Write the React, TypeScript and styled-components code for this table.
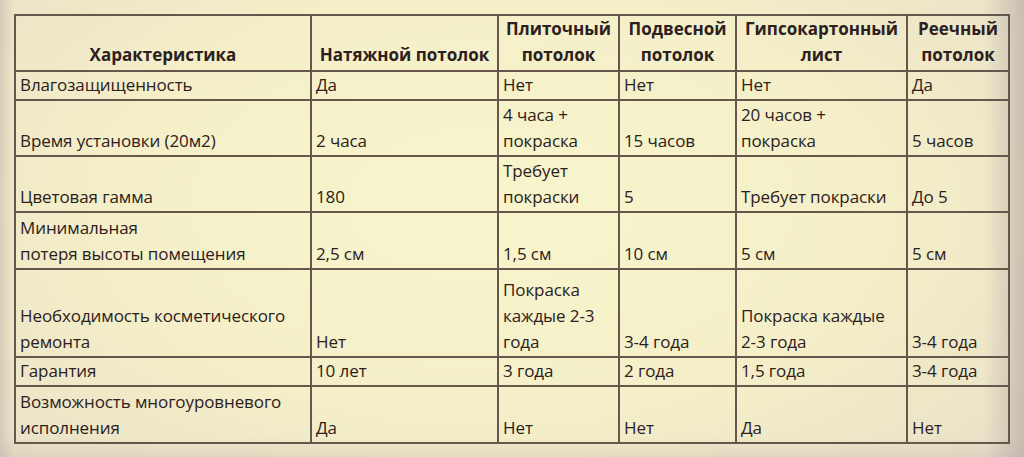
import React from 'react';
import styled, { createGlobalStyle } from 'styled-components';

const GlobalStyle = createGlobalStyle`
  html, body {
    margin: 0;
    padding: 0;
  }
  body {
    width: 1024px;
    height: 457px;
    overflow: hidden;
    font-family: 'Open Sans', 'Noto Sans', sans-serif;
  }
`;

const Page = styled.div`
  width: 1024px;
  height: 457px;
  box-sizing: border-box;
  padding: 14px 15px 0 14px;
  background:
    linear-gradient(90deg, rgba(190, 170, 170, 0.45) 0px, rgba(190, 170, 170, 0) 14px),
    linear-gradient(270deg, rgba(170, 160, 160, 0.55) 0px, rgba(170, 160, 160, 0) 40px),
    linear-gradient(0deg, rgba(200, 185, 180, 0.35) 0px, rgba(200, 185, 180, 0) 20px),
    radial-gradient(ellipse 70% 85% at 48% 45%, #f8f5cc 0%, #f4efc8 55%, #e8dfc7 100%);
`;

const Table = styled.table`
  width: 995px;
  table-layout: fixed;
  border-collapse: collapse;
  color: #2c2020;
  font-size: 17px;
  line-height: 26px;
`;

const Row = styled.tr<{ $h: number }>`
  height: ${(p) => p.$h}px;
`;

const HeadCell = styled.th`
  border: 2px solid #66564b;
  padding: 0 3px 2px;
  font-weight: 700;
  font-size: 17px;
  text-align: center;
  vertical-align: bottom;
  white-space: nowrap;
  line-height: 26px;
`;

const Cell = styled.td`
  border: 2px solid #66564b;
  padding: 0 3px 1px 4px;
  text-align: left;
  vertical-align: bottom;
  white-space: nowrap;
  letter-spacing: -0.1px;
`;

const widths = [296, 187, 121, 117, 171, 102];

const headers: string[][] = [
  ['Характеристика'],
  ['Натяжной потолок'],
  ['Плиточный', 'потолок'],
  ['Подвесной', 'потолок'],
  ['Гипсокартонный', 'лист'],
  ['Реечный', 'потолок'],
];

const rows: { h: number; cells: string[][] }[] = [
  { h: 29, cells: [['Влагозащищенность'], ['Да'], ['Нет'], ['Нет'], ['Нет'], ['Да']] },
  {
    h: 56,
    cells: [
      ['Время установки (20м2)'],
      ['2 часа'],
      ['4 часа +', 'покраска'],
      ['15 часов'],
      ['20 часов +', 'покраска'],
      ['5 часов'],
    ],
  },
  {
    h: 56,
    cells: [['Цветовая гамма'], ['180'], ['Требует', 'покраски'], ['5'], ['Требует покраски'], ['До 5']],
  },
  {
    h: 57,
    cells: [
      ['Минимальная', 'потеря высоты помещения'],
      ['2,5 см'],
      ['1,5 см'],
      ['10 см'],
      ['5 см'],
      ['5 см'],
    ],
  },
  {
    h: 88,
    cells: [
      ['Необходимость косметического', 'ремонта'],
      ['Нет'],
      ['Покраска', 'каждые 2-3', 'года'],
      ['3-4 года'],
      ['Покраска каждые', '2-3 года'],
      ['3-4 года'],
    ],
  },
  { h: 27, cells: [['Гарантия'], ['10 лет'], ['3 года'], ['2 года'], ['1,5 года'], ['3-4 года']] },
  {
    h: 57,
    cells: [['Возможность многоуровневого', 'исполнения'], ['Да'], ['Нет'], ['Нет'], ['Да'], ['Нет']],
  },
];

const Lines: React.FC<{ lines: string[] }> = ({ lines }) => (
  <>
    {lines.map((l, i) => (
      <React.Fragment key={i}>
        {i > 0 && <br />}
        {l}
      </React.Fragment>
    ))}
  </>
);

const App: React.FC = () => {
  return (
    <>
      <GlobalStyle />
      <Page>
        <Table>
          <colgroup>
            {widths.map((w, i) => (
              <col key={i} style={{ width: w }} />
            ))}
          </colgroup>
          <thead>
            <Row $h={55}>
              {headers.map((h, i) => (
                <HeadCell key={i}>
                  <Lines lines={h} />
                </HeadCell>
              ))}
            </Row>
          </thead>
          <tbody>
            {rows.map((r, i) => (
              <Row key={i} $h={r.h}>
                {r.cells.map((c, j) => (
                  <Cell key={j}>
                    <Lines lines={c} />
                  </Cell>
                ))}
              </Row>
            ))}
          </tbody>
        </Table>
      </Page>
    </>
  );
};

export default App;
